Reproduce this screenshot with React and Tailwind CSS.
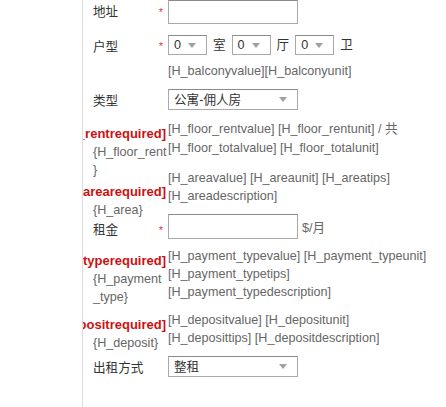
import React from "react";

function Arrow() {
  return (
    <svg width="8" height="5" viewBox="0 0 8 5" className="shrink-0">
      <path d="M0 0 L8 0 L4 5 Z" fill="#a0a0a0" />
    </svg>
  );
}

function Select({ value, w }) {
  return (
    <div className={`${w} h-full flex items-center justify-between pl-[5px] pr-[10px] border border-[#a9a9a9] border-t-[#8a8a8a] bg-white text-[#333]`}>
      <span>{value}</span>
      <Arrow />
    </div>
  );
}

function Star() {
  return <span className="text-[#e03a3a] text-[11px] leading-none">*</span>;
}

function Req({ children }) {
  return (
    <div className="flex justify-end pr-[2px] h-[18px] leading-[18px]">
      <span className="whitespace-nowrap font-bold text-[13px] text-[#cc1111]">{children}</span>
    </div>
  );
}

export default function App() {
  return (
    <div className="flex w-[446px] h-[407px] bg-white text-[12.6px] leading-[18px] text-[#666] font-['Liberation_Sans','Noto_Sans_CJK_SC',sans-serif]">
      <div className="w-[83px] shrink-0 border-r border-[#dcdcdc]" />
      <div className="flex-1 overflow-hidden">
        {/* 地址 */}
        <div className="flex items-center h-[24px]">
          <div className="w-[85px] shrink-0 flex items-center justify-between pl-[10px] pr-[5px] text-[#333]">
            <span>地址</span>
            <Star />
          </div>
          <div className="w-[130px] h-full border border-[#a9a9a9] border-t-[#8a8a8a]" />
        </div>

        {/* 户型 */}
        <div className="flex items-center h-[20px] mt-[11px]">
          <div className="w-[85px] shrink-0 flex items-center justify-between pl-[10px] pr-[5px] pt-[3px] text-[#333]">
            <span>户型</span>
            <Star />
          </div>
          <div className="flex items-center h-full gap-[6px] text-[#333]">
            <Select value="0" w="w-[39px]" />
            <span>室</span>
            <Select value="0" w="w-[39px]" />
            <span>厅</span>
            <Select value="0" w="w-[39px]" />
            <span>卫</span>
          </div>
        </div>
        <div className="flex mt-[7px]">
          <div className="w-[85px] shrink-0" />
          <div className="whitespace-nowrap">[H_balconyvalue][H_balconyunit]</div>
        </div>

        {/* 类型 */}
        <div className="flex items-center h-[21px] mt-[9px]">
          <div className="w-[85px] shrink-0 pl-[10px] pt-[2px] text-[#333]">类型</div>
          <Select value="公寓-佣人房" w="w-[130px]" />
        </div>

        {/* 楼层 / 面积 / 租金 */}
        <div className="flex mt-[10px]">
          <div className="w-[85px] shrink-0 pt-[5px]">
            <Req>[H_floor_rentrequired]</Req>
            <div className="pl-[10px] whitespace-nowrap">{"{H_floor_rent"}</div>
            <div className="pl-[10px]">{"}"}</div>
            <div className="mt-[4px]">
              <Req>[H_arearequired]</Req>
            </div>
            <div className="pl-[10px]">{"{H_area}"}</div>
            <div className="mt-[2px] flex items-center justify-between pl-[10px] pr-[5px] text-[#333]">
              <span>租金</span>
              <Star />
            </div>
          </div>
          <div className="flex-1 whitespace-nowrap">
            <div className="leading-[19px]">[H_floor_rentvalue] [H_floor_rentunit] / 共</div>
            <div className="leading-[19px]">[H_floor_totalvalue] [H_floor_totalunit]</div>
            <div className="mt-[11px]">[H_areavalue] [H_areaunit] [H_areatips]</div>
            <div>[H_areadescription]</div>
            <div className="mt-[9px] flex items-center gap-[4px]">
              <div className="w-[130px] h-[25px] border border-[#a9a9a9] border-t-[#8a8a8a]" />
              <span className="pt-[3px]">$/月</span>
            </div>
          </div>
        </div>

        {/* 付款方式 */}
        <div className="flex mt-[8px]">
          <div className="w-[85px] shrink-0 pt-[5px]">
            <Req>[H_payment_typerequired]</Req>
            <div className="pl-[10px]">{"{H_payment"}</div>
            <div className="pl-[10px]">_type{"}"}</div>
          </div>
          <div className="flex-1 whitespace-nowrap">
            <div>[H_payment_typevalue] [H_payment_typeunit]</div>
            <div>[H_payment_typetips]</div>
            <div>[H_payment_typedescription]</div>
          </div>
        </div>

        {/* 押金 */}
        <div className="flex mt-[5px]">
          <div className="w-[85px] shrink-0 pt-[5px]">
            <Req>[H_depositrequired]</Req>
            <div className="pl-[10px]">{"{H_deposit}"}</div>
          </div>
          <div className="flex-1 whitespace-nowrap">
            <div>[H_depositvalue] [H_depositunit]</div>
            <div>[H_deposittips] [H_depositdescription]</div>
          </div>
        </div>

        {/* 出租方式 */}
        <div className="flex items-center h-[21px] mt-[4px]">
          <div className="w-[85px] shrink-0 pl-[10px] pt-[3px] text-[#333]">出租方式</div>
          <Select value="整租" w="w-[130px]" />
        </div>
      </div>
    </div>
  );
}
